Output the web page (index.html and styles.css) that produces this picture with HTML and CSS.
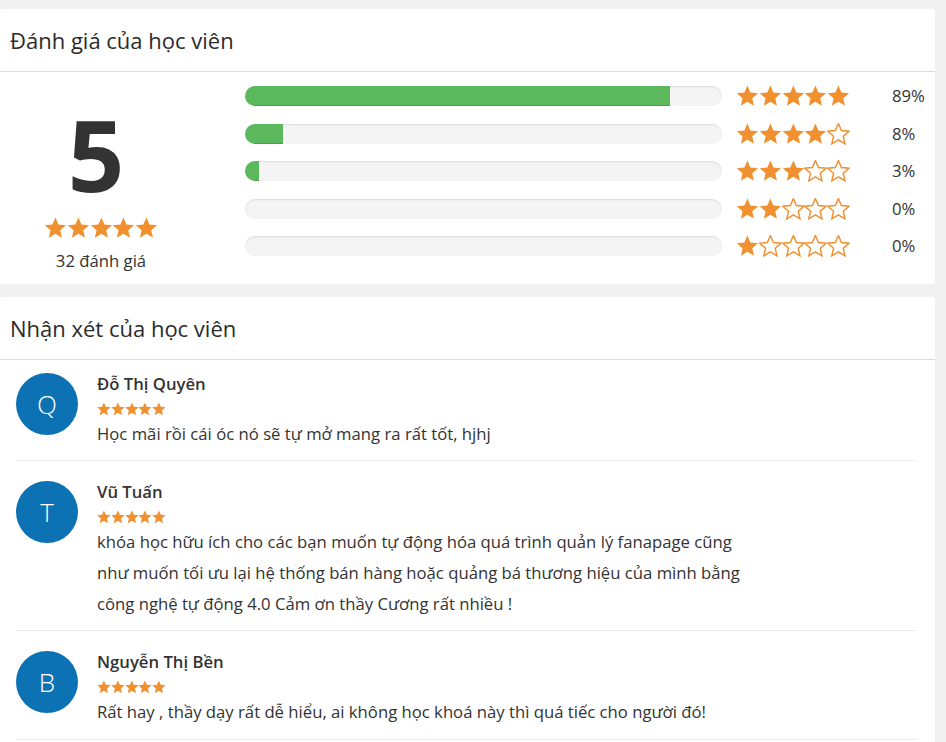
FILE: index.html
```html
<!DOCTYPE html>
<html lang="vi">
<head>
<meta charset="utf-8">
<title>Đánh giá của học viên</title>
<link rel="stylesheet" href="styles.css">
</head>
<body>
<svg class="defs" width="0" height="0" aria-hidden="true">
  <defs>
    <symbol id="star" viewBox="0 0 24 24">
      <polygon points="12,0.6 15.3,8.25 23.6,9.0 17.3,14.5 19.15,22.7 12,18.4 4.85,22.7 6.7,14.5 0.4,9.0 8.7,8.25"/>
    </symbol>
  </defs>
</svg>

<section class="card">
  <h2 class="card-head">Đánh giá của học viên</h2>
  <div class="summary">
    <div class="score">
      <div class="score-num">5</div>
      <div class="stars stars-lg">
        <svg class="s on"><use href="#star"/></svg><svg class="s on"><use href="#star"/></svg><svg class="s on"><use href="#star"/></svg><svg class="s on"><use href="#star"/></svg><svg class="s on"><use href="#star"/></svg>
      </div>
      <div class="score-count">32 đánh giá</div>
    </div>
    <div class="dist">
      <div class="dist-row">
        <div class="bar"><div class="fill" style="width:89%"></div></div>
        <div class="stars stars-lg">
          <svg class="s on"><use href="#star"/></svg><svg class="s on"><use href="#star"/></svg><svg class="s on"><use href="#star"/></svg><svg class="s on"><use href="#star"/></svg><svg class="s on"><use href="#star"/></svg>
        </div>
        <div class="pct">89%</div>
      </div>
      <div class="dist-row">
        <div class="bar"><div class="fill" style="width:8%"></div></div>
        <div class="stars stars-lg">
          <svg class="s on"><use href="#star"/></svg><svg class="s on"><use href="#star"/></svg><svg class="s on"><use href="#star"/></svg><svg class="s on"><use href="#star"/></svg><svg class="s off"><use href="#star"/></svg>
        </div>
        <div class="pct">8%</div>
      </div>
      <div class="dist-row">
        <div class="bar"><div class="fill" style="width:3%"></div></div>
        <div class="stars stars-lg">
          <svg class="s on"><use href="#star"/></svg><svg class="s on"><use href="#star"/></svg><svg class="s on"><use href="#star"/></svg><svg class="s off"><use href="#star"/></svg><svg class="s off"><use href="#star"/></svg>
        </div>
        <div class="pct">3%</div>
      </div>
      <div class="dist-row">
        <div class="bar"><div class="fill" style="width:0%"></div></div>
        <div class="stars stars-lg">
          <svg class="s on"><use href="#star"/></svg><svg class="s on"><use href="#star"/></svg><svg class="s off"><use href="#star"/></svg><svg class="s off"><use href="#star"/></svg><svg class="s off"><use href="#star"/></svg>
        </div>
        <div class="pct">0%</div>
      </div>
      <div class="dist-row">
        <div class="bar"><div class="fill" style="width:0%"></div></div>
        <div class="stars stars-lg">
          <svg class="s on"><use href="#star"/></svg><svg class="s off"><use href="#star"/></svg><svg class="s off"><use href="#star"/></svg><svg class="s off"><use href="#star"/></svg><svg class="s off"><use href="#star"/></svg>
        </div>
        <div class="pct">0%</div>
      </div>
    </div>
  </div>
</section>

<section class="card card-reviews">
  <h2 class="card-head">Nhận xét của học viên</h2>
  <div class="reviews">
    <div class="review">
      <div class="avatar">Q</div>
      <div class="review-body">
        <div class="name">Đỗ Thị Quyên</div>
        <div class="stars stars-sm">
          <svg class="s on"><use href="#star"/></svg><svg class="s on"><use href="#star"/></svg><svg class="s on"><use href="#star"/></svg><svg class="s on"><use href="#star"/></svg><svg class="s on"><use href="#star"/></svg>
        </div>
        <p class="text">Học mãi rồi cái óc nó sẽ tự mở mang ra rất tốt, hjhj</p>
      </div>
    </div>
    <div class="review">
      <div class="avatar">T</div>
      <div class="review-body">
        <div class="name">Vũ Tuấn</div>
        <div class="stars stars-sm">
          <svg class="s on"><use href="#star"/></svg><svg class="s on"><use href="#star"/></svg><svg class="s on"><use href="#star"/></svg><svg class="s on"><use href="#star"/></svg><svg class="s on"><use href="#star"/></svg>
        </div>
        <p class="text">khóa học hữu ích cho các bạn muốn tự động hóa quá trình quản lý fanapage cũng như muốn tối ưu lại hệ thống bán hàng hoặc quảng bá thương hiệu của mình bằng công nghệ tự động 4.0 Cảm ơn thầy Cương rất nhiều !</p>
      </div>
    </div>
    <div class="review">
      <div class="avatar">B</div>
      <div class="review-body">
        <div class="name">Nguyễn Thị Bền</div>
        <div class="stars stars-sm">
          <svg class="s on"><use href="#star"/></svg><svg class="s on"><use href="#star"/></svg><svg class="s on"><use href="#star"/></svg><svg class="s on"><use href="#star"/></svg><svg class="s on"><use href="#star"/></svg>
        </div>
        <p class="text">Rất hay , thầy dạy rất dễ hiểu, ai không học khoá này thì quá tiếc cho người đó!</p>
      </div>
    </div>
  </div>
</section>
</body>
</html>
```

FILE: styles.css
```css
* { box-sizing: border-box; }

html, body {
  margin: 0;
  padding: 0;
}

body {
  background: #f1f1f1;
  padding: 9px 11px 0 0;
  font-family: "Open Sans", "Noto Sans", "Liberation Sans", sans-serif;
  color: #333;
  font-size: 16.7px;
}

.defs {
  position: absolute;
  width: 0;
  height: 0;
  overflow: hidden;
}

.card {
  background: #fff;
  border-radius: 3px;
}

.card-reviews {
  margin-top: 13px;
}

.card-head {
  margin: 0;
  height: 63px;
  padding: 0 10px;
  display: flex;
  align-items: center;
  border-bottom: 1px solid #dedede;
  font-size: 22px;
  font-weight: 400;
  color: #2b2b2b;
}

/* summary */
.summary {
  display: flex;
  align-items: flex-start;
  padding: 14px 0 0;
}

.score {
  width: 202px;
  display: flex;
  flex-direction: column;
  align-items: center;
  padding: 18px 0 12px;
}

.score-num {
  font-size: 99px;
  font-weight: 700;
  line-height: 100px;
  color: #333;
  padding-right: 10px;
}

.score .stars-lg {
  margin-top: 13px;
}

.score-count {
  margin-top: 11px;
  line-height: 22px;
}

.dist {
  margin-left: 43px;
  display: flex;
  flex-direction: column;
  gap: 17.5px;
  padding-bottom: 28px;
}

.dist-row {
  display: flex;
  align-items: center;
  height: 20px;
}

.bar {
  width: 477px;
  height: 20px;
  border-radius: 10px;
  background: #f4f4f4;
  box-shadow: inset 0 1px 2px rgba(0, 0, 0, 0.1);
  overflow: hidden;
}

.fill {
  height: 100%;
  background: #5cb85c;
  box-shadow: inset 0 -1px 0 rgba(0, 0, 0, 0.15);
}

.dist-row .stars-lg {
  margin-left: 14px;
}

.pct {
  margin-left: 42px;
  line-height: 22px;
}

/* stars */
.stars {
  display: flex;
}

.s {
  display: block;
  overflow: visible;
}

.stars-lg .s {
  width: 22.8px;
  height: 22px;
}

.stars-sm .s {
  width: 13.8px;
  height: 14px;
}

.s.on {
  fill: #f0902f;
}

.s.off {
  fill: #fff;
  stroke: #f0902f;
  stroke-width: 1.6px;
}

/* reviews */
.reviews {
  padding: 0 19px 24px 16px;
}

.review {
  display: flex;
  gap: 19px;
  padding: 20px 0 11px;
  border-bottom: 1px solid #ebebeb;
}

.review:first-child {
  padding-top: 13px;
}

.review:last-child {
  padding-bottom: 12px;
}

.avatar {
  flex: none;
  width: 62px;
  height: 62px;
  border-radius: 50%;
  background: #0d72b4;
  color: #fff;
  display: flex;
  align-items: center;
  justify-content: center;
  font-size: 26px;
  font-weight: 300;
}

.review-body {
  width: 655px;
}

.name {
  font-weight: 600;
  line-height: 22px;
}

.stars-sm {
  margin-top: 7px;
}

.text {
  margin: 2px 0 0;
  line-height: 31px;
}
```
